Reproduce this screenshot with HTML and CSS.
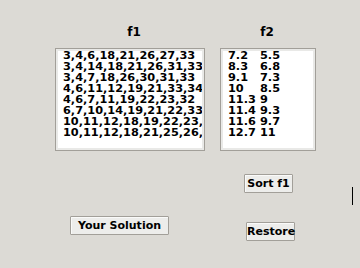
FILE: index.html
```html
<!DOCTYPE html>
<html lang="en">
<head>
  <meta charset="UTF-8">
  <meta name="viewport" content="width=device-width, initial-scale=1.0">
  <title>Sort f1</title>
  <link rel="stylesheet" href="styles.css">
</head>
<body>
  <div class="panels">
    <div class="panel panel-f1">
      <div class="label label-f1">f1</div>
      <div class="list list-f1">
        <div>3,4,6,18,21,26,27,33</div>
        <div>3,4,14,18,21,26,31,33</div>
        <div>3,4,7,18,26,30,31,33</div>
        <div>4,6,11,12,19,21,33,34</div>
        <div>4,6,7,11,19,22,23,32</div>
        <div>6,7,10,14,19,21,22,33</div>
        <div>10,11,12,18,19,22,23,33</div>
        <div>10,11,12,18,21,25,26,33</div>
      </div>
    </div>
    <div class="panel panel-f2">
      <div class="label label-f2">f2</div>
      <div class="list list-f2">
        <span>7.2</span><span>5.5</span>
        <span>8.3</span><span>6.8</span>
        <span>9.1</span><span>7.3</span>
        <span>10</span><span>8.5</span>
        <span>11.3</span><span>9</span>
        <span>11.4</span><span>9.3</span>
        <span>11.6</span><span>9.7</span>
        <span>12.7</span><span>11</span>
      </div>
    </div>
  </div>

  <div class="controls">
    <div class="left-col">
      <button type="button" class="btn btn-solution">Your Solution</button>
    </div>
    <div class="right-col">
      <button type="button" class="btn btn-sort">Sort f1</button>
      <button type="button" class="btn btn-restore">Restore</button>
    </div>
    <div class="caret"></div>
  </div>
</body>
</html>
```

FILE: styles.css
```css
body {
  margin: 0;
  padding: 0;
  background-color: #dcdad5;
  color: #000;
  font-family: "DejaVu Sans", sans-serif;
  font-weight: bold;
  font-size: 11px;
  width: 360px;
  height: 268px;
  overflow: hidden;
}
.panels {
  display: flex;
  padding: 25px 0 0 55px;
  gap: 15px;
}
.panel {
  display: flex;
  flex-direction: column;
}
.label {
  height: 14px;
  line-height: 14px;
  font-size: 12px;
  margin-bottom: 9px;
  text-align: center;
}
.label-f1 {
  padding-left: 8px;
}
.label-f2 {
  padding-right: 2px;
}
.list {
  background: #fff;
  border: 1px solid #a29f99;
  box-shadow: inset 0 0 0 2px #e9e9e7;
  box-sizing: border-box;
  height: 103px;
  padding-top: 1px;
  font-size: 11.3px;
  line-height: 11px;
  overflow: hidden;
  white-space: nowrap;
}
.list-f1 {
  width: 150px;
  padding-left: 7px;
  padding-right: 2px;
}
.list-f1 div {
  height: 11px;
  overflow: hidden;
}
.list-f2 {
  width: 96px;
  padding-left: 7px;
  display: grid;
  grid-template-columns: 32px 1fr;
  grid-auto-rows: 11px;
  align-content: start;
}
.controls {
  display: flex;
}
.left-col {
  padding: 65px 0 0 70px;
}
.right-col {
  display: flex;
  flex-direction: column;
  padding: 23px 0 0 75px;
}
.btn {
  font-family: "DejaVu Sans", sans-serif;
  font-weight: bold;
  font-size: 11px;
  color: #000;
  background: #ededeb;
  border: 1px solid #a29f99;
  border-radius: 1px;
  box-shadow: inset 1px 1px 0 #fafaf9;
  height: 19px;
  line-height: 17px;
  padding: 0;
  margin: 0;
  text-align: center;
  cursor: pointer;
}
.btn-solution {
  width: 99px;
}
.btn-sort {
  width: 49px;
}
.btn-restore {
  width: 49px;
  margin: 29px 0 0 2px;
}
.caret {
  width: 1px;
  height: 18px;
  background: #000;
  margin: 36px 0 0 57px;
}
```
